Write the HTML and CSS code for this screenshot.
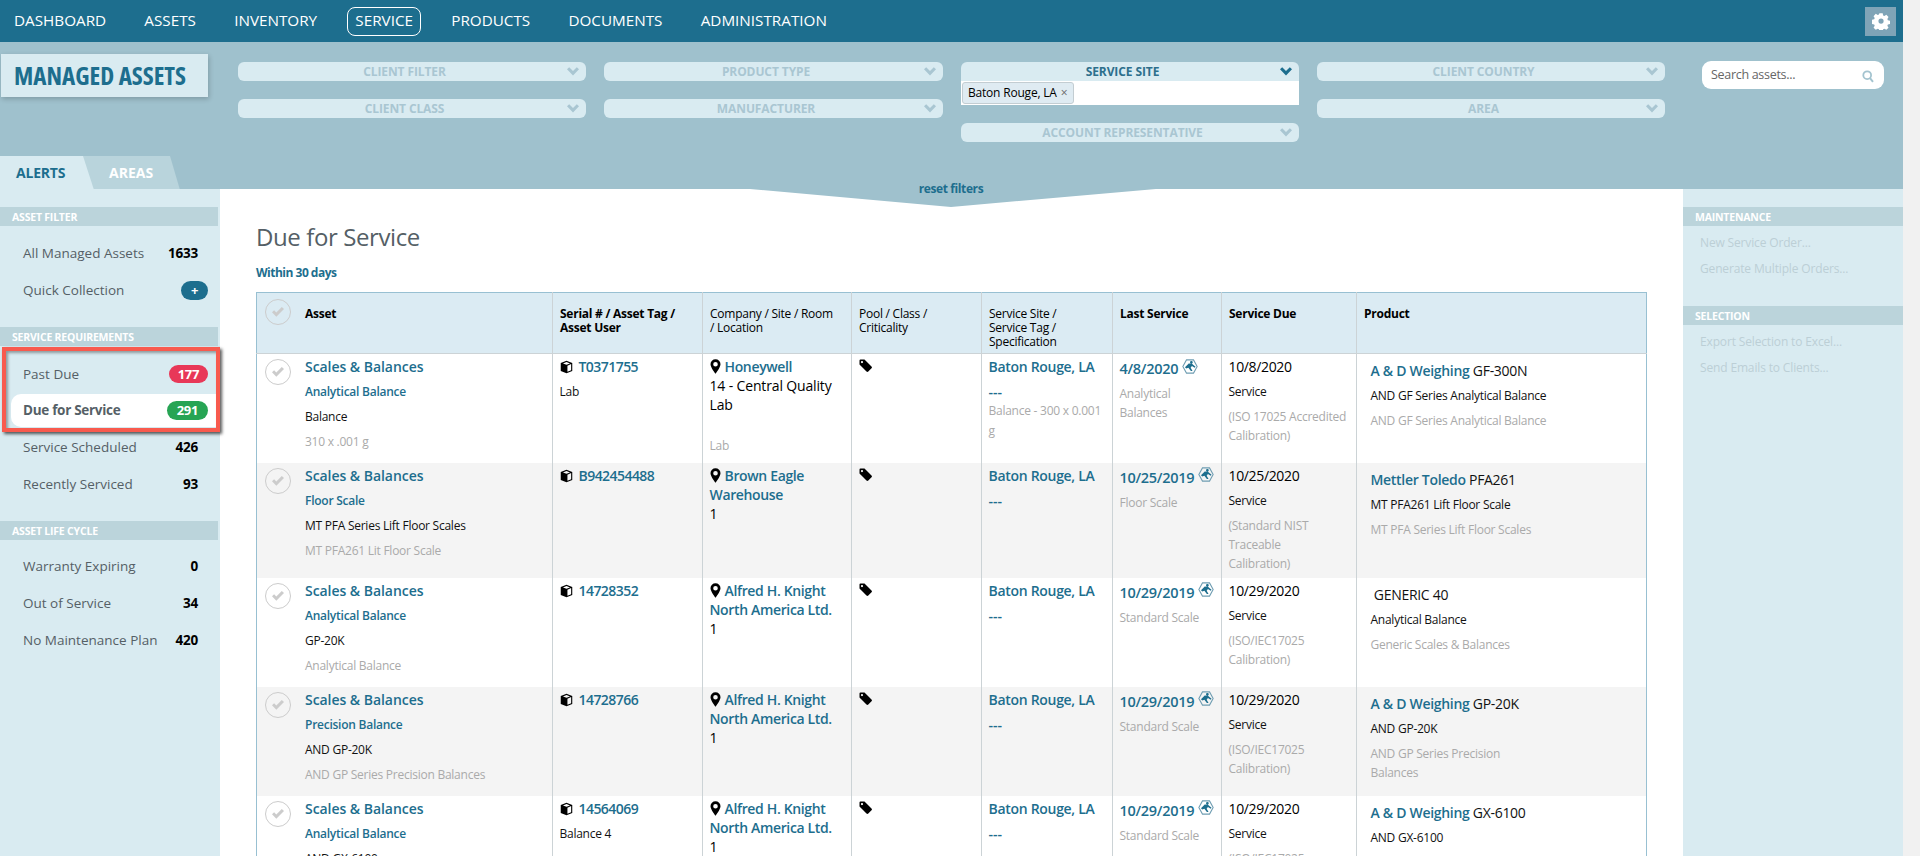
FILE: index.html
```html
<!DOCTYPE html>
<html lang="en">
<head>
<meta charset="utf-8">
<title>Managed Assets</title>
<link rel="stylesheet" href="styles.css">
</head>
<body>
<svg class="defs" width="0" height="0" aria-hidden="true">
  <symbol id="chev" viewBox="0 0 12 9"><path d="M0 2.300 2.200.3 6 4.100 9.800.3 12 2.300 6 8.500z"/></symbol>
  <symbol id="cube" viewBox="0 0 14 14"><path d="M7 .3 13.200 2.800v8.400L7 13.700.8 11.200V2.800zM7 1.600 3.200 3.100 7 4.600l3.800-1.500zM8 5.600v6.600l4-1.700V3.900z" fill-rule="evenodd"/></symbol>
  <symbol id="pin" viewBox="0 0 11 15"><path d="M5.500.3a5 5 0 0 1 5 5c0 3.200-5 9.400-5 9.400s-5-6.200-5-9.400a5 5 0 0 1 5-5zm0 2.700a2.300 2.300 0 1 0 0 4.600 2.300 2.300 0 0 0 0-4.600z" fill-rule="evenodd"/></symbol>
  <symbol id="tag" viewBox="0 0 13 13"><path d="M.5 1.500A1 1 0 0 1 1.500.5h4l7 7a1.300 1.300 0 0 1 0 1.800l-3.200 3.200a1.300 1.300 0 0 1-1.800 0l-7-7zM3 2a1.100 1.100 0 1 0 0 2.200A1.100 1.100 0 0 0 3 2z" fill-rule="evenodd"/></symbol>
  <symbol id="hex" viewBox="0 0 15 14">
    <path d="M4.200.8h6.600l3.400 6.200-3.400 6.200H4.200L.8 7z" fill="none" stroke="#6f9db2" stroke-width="1"/>
    <path d="M8.800 1.800a1.300 1.300 0 1 1 0 2.600 1.300 1.300 0 0 1 0-2.600zM2.800 7.800l3.500-3.600 3 .3 3.400 2.700-.8.900-2.600-1.600-1.200 1.600 1.800 3.200H8.300L6 8.200 4 8.900z" fill="#1d6e8e"/>
  </symbol>
  <symbol id="check" viewBox="0 0 14 12"><path d="M1 6.300 3.100 4.200 5.300 6.400 10.800 1 13 3.100 5.300 10.800z"/></symbol>
</svg>

<div class="page">
  <header class="nav">
    <a class="nav-link">DASHBOARD</a>
    <a class="nav-link">ASSETS</a>
    <a class="nav-link">INVENTORY</a>
    <a class="nav-link active">SERVICE</a>
    <a class="nav-link">PRODUCTS</a>
    <a class="nav-link">DOCUMENTS</a>
    <a class="nav-link">ADMINISTRATION</a>
    <button class="gear" aria-label="Settings">
      <svg width="18" height="18" viewBox="0 0 18 18"><path fill="#fff" fill-rule="evenodd" d="M7.300.8h3.400l.5 2.300 1.300.6 2-1.200 2.300 2.400-1.200 2 .5 1.300 2.300.5v3.400l-2.300.5-.5 1.300 1.200 2-2.300 2.300-2-1.200-1.300.5-.5 2.300H7.300l-.5-2.300-1.300-.5-2 1.200-2.300-2.300 1.200-2-.5-1.300-2.300-.5V7.700l2.300-.5.5-1.300-1.200-2 2.300-2.400 2 1.200 1.300-.6zM9 6.300a2.700 2.700 0 1 0 0 5.400 2.700 2.700 0 0 0 0-5.400z" transform="translate(.4 .4) scale(.96)"/></svg>
    </button>
  </header>

  <section class="filters">
    <div class="brand-col">
      <div class="brand">MANAGED ASSETS</div>
      <div class="tabs">
        <div class="tab tab-on">ALERTS</div>
        <div class="tab tab-off">AREAS</div>
      </div>
    </div>
    <div class="fgrid">
      <div class="fcol w1">
        <div class="sel">CLIENT FILTER<svg class="chev"><use href="#chev"/></svg></div>
        <div class="sel">CLIENT CLASS<svg class="chev"><use href="#chev"/></svg></div>
      </div>
      <div class="fcol w2">
        <div class="sel">PRODUCT TYPE<svg class="chev"><use href="#chev"/></svg></div>
        <div class="sel">MANUFACTURER<svg class="chev"><use href="#chev"/></svg></div>
      </div>
      <div class="fcol w3">
        <div class="sel-open">
          <div class="sel sel-on">SERVICE SITE<svg class="chev"><use href="#chev"/></svg></div>
          <div class="chips"><span class="chip">Baton Rouge, LA <i>×</i></span></div>
        </div>
        <div class="sel">ACCOUNT REPRESENTATIVE<svg class="chev"><use href="#chev"/></svg></div>
      </div>
      <div class="fcol w1">
        <div class="sel">CLIENT COUNTRY<svg class="chev"><use href="#chev"/></svg></div>
        <div class="sel">AREA<svg class="chev"><use href="#chev"/></svg></div>
      </div>
    </div>
    <div class="search">
      <span>Search assets...</span>
      <svg width="12" height="13" viewBox="0 0 12 13"><circle cx="5.200" cy="5.200" r="3.900" fill="none" stroke="#a3c3cf" stroke-width="1.800"/><path d="M8 8.200l3 3.600" stroke="#a3c3cf" stroke-width="2"/></svg>
    </div>
  </section>

  <div class="body">
    <svg class="pointer" width="406" height="18" viewBox="0 0 406 18"><path d="M0 0H406L201 18z" fill="#9fc1cd"/></svg>
    <a class="reset">reset filters</a>

    <aside class="side">
      <h3 class="bar">ASSET FILTER</h3>
      <ul class="list">
        <li class="item">All Managed Assets<b class="count">1633</b></li>
        <li class="item">Quick Collection<b class="pill pill-blue">+</b></li>
      </ul>
      <h3 class="bar">SERVICE REQUIREMENTS</h3>
      <ul class="list req">
        <li class="item">Past Due<b class="pill pill-red">177</b></li>
        <li class="item item-on">Due for Service<b class="pill pill-green">291</b></li>
        <li class="item">Service Scheduled<b class="count">426</b></li>
        <li class="item">Recently Serviced<b class="count">93</b></li>
        <li class="highlight"></li>
      </ul>
      <h3 class="bar">ASSET LIFE CYCLE</h3>
      <ul class="list life">
        <li class="item">Warranty Expiring<b class="count">0</b></li>
        <li class="item">Out of Service<b class="count">34</b></li>
        <li class="item">No Maintenance Plan<b class="count">420</b></li>
      </ul>
    </aside>

    <main class="main">
      <h1 class="title">Due for Service</h1>
      <p class="within">Within 30 days</p>
      <table class="grid">
        <colgroup>
          <col class="c1"><col class="c2"><col class="c3"><col class="c4"><col class="c5"><col class="c6"><col class="c7"><col class="c8">
        </colgroup>
        <thead>
          <tr>
            <th class="th-asset b"><span class="tick"><svg><use href="#check"/></svg></span>Asset</th>
            <th class="b">Serial # / Asset Tag /<br>Asset User</th>
            <th>Company / Site / Room<br>/ Location</th>
            <th>Pool / Class /<br>Criticality</th>
            <th>Service Site /<br>Service Tag /<br>Specification</th>
            <th class="b">Last Service</th>
            <th class="b">Service Due</th>
            <th class="b">Product</th>
          </tr>
        </thead>
        <tbody>
          <tr class="r1">
            <td class="asset"><span class="tick"><svg><use href="#check"/></svg></span><div class="t ttl">Scales &amp; Balances</div><div class="s">Analytical Balance</div><div class="k">Balance</div><div class="g">310 x .001 g</div></td>
            <td><div class="t num"><svg class="ic"><use href="#cube"/></svg>T0371755</div><div class="k">Lab</div></td>
            <td class="co"><div class="n"><svg class="ic-pin"><use href="#pin"/></svg>Honeywell</div><div class="p">14 - Central Quality<br>Lab</div><div class="p">&nbsp;</div><div class="g">Lab</div></td>
            <td><svg class="ic-tag"><use href="#tag"/></svg></td>
            <td class="st"><div class="t">Baton Rouge, LA</div><div class="s dash">---</div><div class="w">Balance - 300 x 0.001<br>g</div></td>
            <td class="ls"><div class="d">4/8/2020<svg class="ic-hex"><use href="#hex"/></svg></div><div class="w">Analytical<br>Balances</div></td>
            <td><div class="v">10/8/2020</div><div class="k">Service</div><div class="w">(ISO 17025 Accredited<br>Calibration)</div></td>
            <td class="pr"><div class="t"><span>A &amp; D Weighing</span> GF-300N</div><div class="k">AND GF Series Analytical Balance</div><div class="g">AND GF Series Analytical Balance</div></td>
          </tr>
          <tr class="r2">
            <td class="asset"><span class="tick"><svg><use href="#check"/></svg></span><div class="t ttl">Scales &amp; Balances</div><div class="s">Floor Scale</div><div class="k">MT PFA Series Lift Floor Scales</div><div class="g">MT PFA261 Lit Floor Scale</div></td>
            <td><div class="t num"><svg class="ic"><use href="#cube"/></svg>B942454488</div></td>
            <td class="co"><div class="n"><svg class="ic-pin"><use href="#pin"/></svg>Brown Eagle<br>Warehouse</div><div class="p">1</div></td>
            <td><svg class="ic-tag"><use href="#tag"/></svg></td>
            <td class="st"><div class="t">Baton Rouge, LA</div><div class="s dash">---</div></td>
            <td class="ls"><div class="d">10/25/2019<svg class="ic-hex"><use href="#hex"/></svg></div><div class="w">Floor Scale</div></td>
            <td><div class="v">10/25/2020</div><div class="k">Service</div><div class="w">(Standard NIST<br>Traceable<br>Calibration)</div></td>
            <td class="pr"><div class="t"><span>Mettler Toledo</span> PFA261</div><div class="k">MT PFA261 Lift Floor Scale</div><div class="g">MT PFA Series Lift Floor Scales</div></td>
          </tr>
          <tr class="r3">
            <td class="asset"><span class="tick"><svg><use href="#check"/></svg></span><div class="t ttl">Scales &amp; Balances</div><div class="s">Analytical Balance</div><div class="k">GP-20K</div><div class="g">Analytical Balance</div></td>
            <td><div class="t num"><svg class="ic"><use href="#cube"/></svg>14728352</div></td>
            <td class="co"><div class="n"><svg class="ic-pin"><use href="#pin"/></svg>Alfred H. Knight<br>North America Ltd.</div><div class="p">1</div></td>
            <td><svg class="ic-tag"><use href="#tag"/></svg></td>
            <td class="st"><div class="t">Baton Rouge, LA</div><div class="s dash">---</div></td>
            <td class="ls"><div class="d">10/29/2019<svg class="ic-hex"><use href="#hex"/></svg></div><div class="w">Standard Scale</div></td>
            <td><div class="v">10/29/2020</div><div class="k">Service</div><div class="w">(ISO/IEC17025<br>Calibration)</div></td>
            <td class="pr"><div class="t">&nbsp;GENERIC 40</div><div class="k">Analytical Balance</div><div class="g">Generic Scales &amp; Balances</div></td>
          </tr>
          <tr class="r3">
            <td class="asset"><span class="tick"><svg><use href="#check"/></svg></span><div class="t ttl">Scales &amp; Balances</div><div class="s">Precision Balance</div><div class="k">AND GP-20K</div><div class="g">AND GP Series Precision Balances</div></td>
            <td><div class="t num"><svg class="ic"><use href="#cube"/></svg>14728766</div></td>
            <td class="co"><div class="n"><svg class="ic-pin"><use href="#pin"/></svg>Alfred H. Knight<br>North America Ltd.</div><div class="p">1</div></td>
            <td><svg class="ic-tag"><use href="#tag"/></svg></td>
            <td class="st"><div class="t">Baton Rouge, LA</div><div class="s dash">---</div></td>
            <td class="ls"><div class="d">10/29/2019<svg class="ic-hex"><use href="#hex"/></svg></div><div class="w">Standard Scale</div></td>
            <td><div class="v">10/29/2020</div><div class="k">Service</div><div class="w">(ISO/IEC17025<br>Calibration)</div></td>
            <td class="pr"><div class="t"><span>A &amp; D Weighing</span> GP-20K</div><div class="k">AND GP-20K</div><div class="w wg">AND GP Series Precision<br>Balances</div></td>
          </tr>
          <tr class="r3">
            <td class="asset"><span class="tick"><svg><use href="#check"/></svg></span><div class="t ttl">Scales &amp; Balances</div><div class="s">Analytical Balance</div><div class="k">AND GX-6100</div></td>
            <td><div class="t num"><svg class="ic"><use href="#cube"/></svg>14564069</div><div class="k">Balance 4</div></td>
            <td class="co"><div class="n"><svg class="ic-pin"><use href="#pin"/></svg>Alfred H. Knight<br>North America Ltd.</div><div class="p">1</div></td>
            <td><svg class="ic-tag"><use href="#tag"/></svg></td>
            <td class="st"><div class="t">Baton Rouge, LA</div><div class="s dash">---</div></td>
            <td class="ls"><div class="d">10/29/2019<svg class="ic-hex"><use href="#hex"/></svg></div><div class="w">Standard Scale</div></td>
            <td><div class="v">10/29/2020</div><div class="k">Service</div><div class="w">(ISO/IEC17025<br>Calibration)</div></td>
            <td class="pr"><div class="t"><span>A &amp; D Weighing</span> GX-6100</div><div class="k">AND GX-6100</div></td>
          </tr>
        </tbody>
      </table>
    </main>

    <aside class="side side-r">
      <h3 class="bar">MAINTENANCE</h3>
      <ul class="acts">
        <li>New Service Order...</li>
        <li>Generate Multiple Orders...</li>
      </ul>
      <h3 class="bar">SELECTION</h3>
      <ul class="acts">
        <li>Export Selection to Excel...</li>
        <li>Send Emails to Clients...</li>
      </ul>
    </aside>
  </div>
</div>
</body>
</html>
```
FILE: styles.css
```css
* { box-sizing: border-box; }
html, body { margin: 0; height: 856px; overflow: hidden; }
body { background: #f1f1f1; font-family: "Open Sans", "Noto Sans", sans-serif; color: #000; }
.defs { position: absolute; }
ul { list-style: none; margin: 0; padding: 0; }

.page { width: 1903px; height: 856px; overflow: hidden; background: #fff; display: flex; flex-direction: column; }

/* top nav */
.nav { height: 42px; flex: none; background: #1d6e8e; display: flex; align-items: center; padding-left: 6px; gap: 22.2px; }
.nav-link { color: #fff; font-size: 15.25px; padding: 0 7px; height: 29px; line-height: 25px; border: 1px solid transparent; border-radius: 8px; }
.nav-link.active { border-color: #fff; }
.gear { margin-left: auto; margin-right: 7px; width: 31px; height: 29px; padding: 0; border: 0; background: #7fa4b7; display: flex; align-items: center; justify-content: center; }

/* filter band */
.filters { height: 147px; flex: none; background: #9fc1cd; display: flex; }
.brand-col { width: 238px; flex: none; display: flex; flex-direction: column; justify-content: space-between; }
.brand { margin: 12px 0 0 1px; width: 207px; height: 43px; background: #d9ebf1; color: #1d6e8e; font-weight: 700; font-size: 25px; font-stretch: 75%; line-height: 42px; padding-left: 13px; box-shadow: 1px 2px 5px rgba(0,0,0,.2); white-space: nowrap; }
.tabs { display: flex; height: 34px; position: relative; top: 1px; }
.tab { font-weight: 700; font-size: 14px; letter-spacing: -.2px; line-height: 33px; }
.tab-on { width: 94px; padding-left: 16px; background: #d9ebf1; color: #1d6e8e; clip-path: polygon(0 0, 83px 0, 94px 100%, 0 100%); position: relative; z-index: 1; }
.tab-off { width: 98px; margin-left: -12px; padding-left: 27px; background: #b9d4dc; color: #fff; letter-spacing: 0; clip-path: polygon(0 0, 88px 0, 98px 100%, 10px 100%); }

.fgrid { display: flex; gap: 18px; padding-top: 20px; }
.fcol { display: flex; flex-direction: column; gap: 18px; }
.w1 { width: 348px; }
.w2 { width: 339px; }
.w3 { width: 338px; }
.sel { position: relative; height: 19px; line-height: 19px; padding-right: 15px; text-align: center; background: #d9ebf1; color: #a9c6d2; border-radius: 6px; font-size: 12px; font-weight: 700; letter-spacing: -.1px; }
.chev { position: absolute; right: 7px; top: 5px; width: 12px; height: 9px; fill: #a9c6d2; }
.sel-on { color: #2d6f8c; border-radius: 6px 6px 0 0; }
.sel-on .chev { fill: #1d6e8e; }
.chips { height: 24px; background: #fff; padding: 1px; display: flex; }
.chip { height: 22px; padding: 0 5px; width: 112px; line-height: 19px; background: #dfebf2; border: 1px solid #c3cdd2; border-radius: 3px; font-size: 12px; letter-spacing: -.2px; white-space: nowrap; }
.chip i { font-style: normal; color: #666; margin-left: 1px; }
.search { margin: 19px 0 0 37px; width: 182px; height: 28px; background: #fff; border-radius: 9px; display: flex; align-items: center; justify-content: space-between; padding: 0 10px 0 9px; font-size: 12.5px; letter-spacing: -.3px; color: #666; }
.search span { padding-bottom: 2px; }
.search svg { position: relative; top: 1px; }

/* body columns */
.body { flex: 1; min-height: 0; display: flex; position: relative; }
.pointer { position: absolute; left: 750px; top: 0; }
.reset { position: absolute; left: 951px; top: -7px; transform: translateX(-50%); font-size: 12px; font-weight: 700; letter-spacing: -.4px; line-height: 14px; color: #1d6e8e; }

.side { width: 220px; flex: none; background: #d9ebf1; padding-top: 18px; }
.bar { margin: 0 2px 0 0; height: 19px; line-height: 20px; padding-left: 12px; background: #bbd4db; color: #fff; font-size: 10.5px; font-weight: 700; letter-spacing: -.2px; }
.list { padding: 9px 0 19px; position: relative; }
.life { padding-top: 8px; }
.item { height: 36.7px; margin-left: 11px; padding: 0 12px; display: flex; align-items: center; justify-content: space-between; font-size: 13.5px; color: #555f66; white-space: nowrap; }
.item-on { height: 32.7px; margin: 2px 0 2px 11px; background: #fff; border-radius: 10px 0 0 10px; font-weight: 700; letter-spacing: -.3px; }
.count { color: #000; padding-right: 10px; font-weight: 700; font-size: 13.5px; letter-spacing: -.2px; }
.pill { color: #fff; border-radius: 10px; height: 19px; min-width: 39px; line-height: 18px; text-align: center; font-size: 13px; font-weight: 700; letter-spacing: -.2px; }
.pill-blue { background: #1d6e8e; min-width: 27px; }
.pill-red { background: #e83858; height: 18px; }
.pill-green { background: #27a454; min-width: 41px; }
.highlight { position: absolute; left: 2px; top: 1px; width: 218px; height: 85px; border: 4px solid #f85a4e; box-shadow: 2px 2px 3px rgba(0,0,0,.65), inset 2px 2px 3px rgba(0,0,0,.35); pointer-events: none; }

.side-r .bar { margin-right: 0; }
.acts { height: 80px; padding-top: 4px; }
.acts li { height: 26px; line-height: 26px; padding-left: 17px; font-size: 12px; letter-spacing: -.15px; color: #bccfd6; }

/* main */
.main { flex: 1; min-width: 0; padding: 0 36px; }
.title { margin: 32px 0 0; font-size: 24px; font-weight: 400; letter-spacing: -.4px; line-height: 32px; color: #555f66; }
.within { margin: 12px 0 0; font-size: 12px; font-weight: 700; letter-spacing: -.5px; line-height: 16px; color: #1d6e8e; }

.grid { margin-top: 11px; width: 1390px; table-layout: fixed; border-collapse: collapse; border: 1px solid #98c0d2; font-size: 12px; letter-spacing: -.25px; }
.c1 { width: 296px; } .c2 { width: 150px; } .c3 { width: 149px; } .c4 { width: 130px; }
.c5 { width: 131px; } .c6 { width: 109px; } .c7 { width: 135px; } .c8 { width: 290px; }
.grid th { height: 61px; padding: 14px 7px 0; vertical-align: top; text-align: left; font-weight: 400; line-height: 14px; background: #dbebf3; border: 1px solid #ccd3d6; border-top: 0; }
.grid th:last-child, .grid td:last-child { border-right: 0; }
.grid th:first-child, .grid td:first-child { border-left: 0; }
.grid th.b { font-weight: 700; }
.grid td { padding: 0 6.5px; vertical-align: top; border-left: 1px solid #ccd3d6; border-right: 1px solid #ccd3d6; }
.grid tbody tr:nth-child(even) { background: #f4f4f4; }
.r1 { height: 109px; }
.r2 { height: 115px; }
.r3 { height: 109px; }

.th-asset, .asset { position: relative; }
.grid .th-asset, .grid .asset { padding-left: 48px; }
.tick { position: absolute; left: 8px; top: 5px; width: 26px; height: 26px; border: 1px solid #ccc; border-radius: 50%; display: flex; align-items: center; justify-content: center; }
.th-asset .tick { top: 6px; }
.tick svg { width: 14px; height: 12px; fill: #ccc; }

.t, .s, .k, .g, .d, .v { line-height: 25px; white-space: nowrap; }
.t, .d { color: #1d6e8e; font-size: 14px; font-weight: 600; letter-spacing: -.3px; }
.ttl { letter-spacing: -.05px; }
.num { letter-spacing: -.55px; }
.d { position: relative; top: 2px; font-size: 14.5px; }
.s { color: #1d6e8e; font-weight: 600; font-size: 12px; }
.dash { font-size: 14px; letter-spacing: 0; }
.k { color: #111; }
.g, .w { color: #aaa; }
.w { line-height: 19px; padding-top: 3px; }
.ls .w { padding-top: 5px; }
.st .w { margin-top: -3px; padding-top: 0; line-height: 20px; }
.v { font-size: 14px; letter-spacing: -.35px; }
.co .n { color: #1d6e8e; font-size: 14px; font-weight: 600; letter-spacing: -.35px; line-height: 19px; padding-top: 3px; }
.co .p { font-size: 14px; letter-spacing: -.15px; line-height: 19px; }
.co .g { padding-top: 0; line-height: 25px; }

.ic { width: 13px; height: 14px; margin-right: 6px; vertical-align: -2px; fill: #000; }
.ic-pin { width: 11px; height: 15px; margin-right: 4px; vertical-align: -2px; fill: #000; }
.ic-tag { width: 13px; height: 13px; margin-top: 5px; fill: #000; display: block; }
.ic-hex { width: 16px; height: 15px; margin-left: 4px; position: relative; top: -.5px; }

.pr { padding-left: 13.5px !important; padding-top: 4px !important; }
.pr .t { font-weight: 400; color: #111; }
.pr .t span { font-weight: 600; color: #1d6e8e; }
.pr .wg { padding-top: 3px; }
```
